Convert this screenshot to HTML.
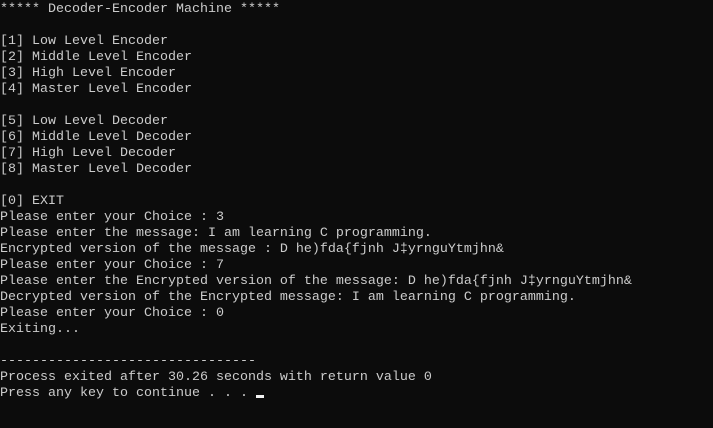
<!DOCTYPE html>
<html><head><meta charset="utf-8"><style>
html,body{margin:0;padding:0;background:#0c0c0c;width:713px;height:428px;overflow:hidden}
pre{margin:0;padding:2px 0 0 0;font-family:"Liberation Mono","DejaVu Sans Mono",monospace;font-size:13.33px;line-height:16px;color:#cccccc;white-space:pre}
.c{display:inline-block;width:8px;height:3px;background:#f2f2f2;vertical-align:-2px}
</style></head><body><pre>***** Decoder-Encoder Machine *****

[1] Low Level Encoder
[2] Middle Level Encoder
[3] High Level Encoder
[4] Master Level Encoder

[5] Low Level Decoder
[6] Middle Level Decoder
[7] High Level Decoder
[8] Master Level Decoder

[0] EXIT
Please enter your Choice : 3
Please enter the message: I am learning C programming.
Encrypted version of the message : D he)fda{fjnh J‡yrnguYtmjhn&amp;
Please enter your Choice : 7
Please enter the Encrypted version of the message: D he)fda{fjnh J‡yrnguYtmjhn&amp;
Decrypted version of the Encrypted message: I am learning C programming.
Please enter your Choice : 0
Exiting...

--------------------------------
Process exited after 30.26 seconds with return value 0
Press any key to continue . . . <span class="c"></span></pre></body></html>
